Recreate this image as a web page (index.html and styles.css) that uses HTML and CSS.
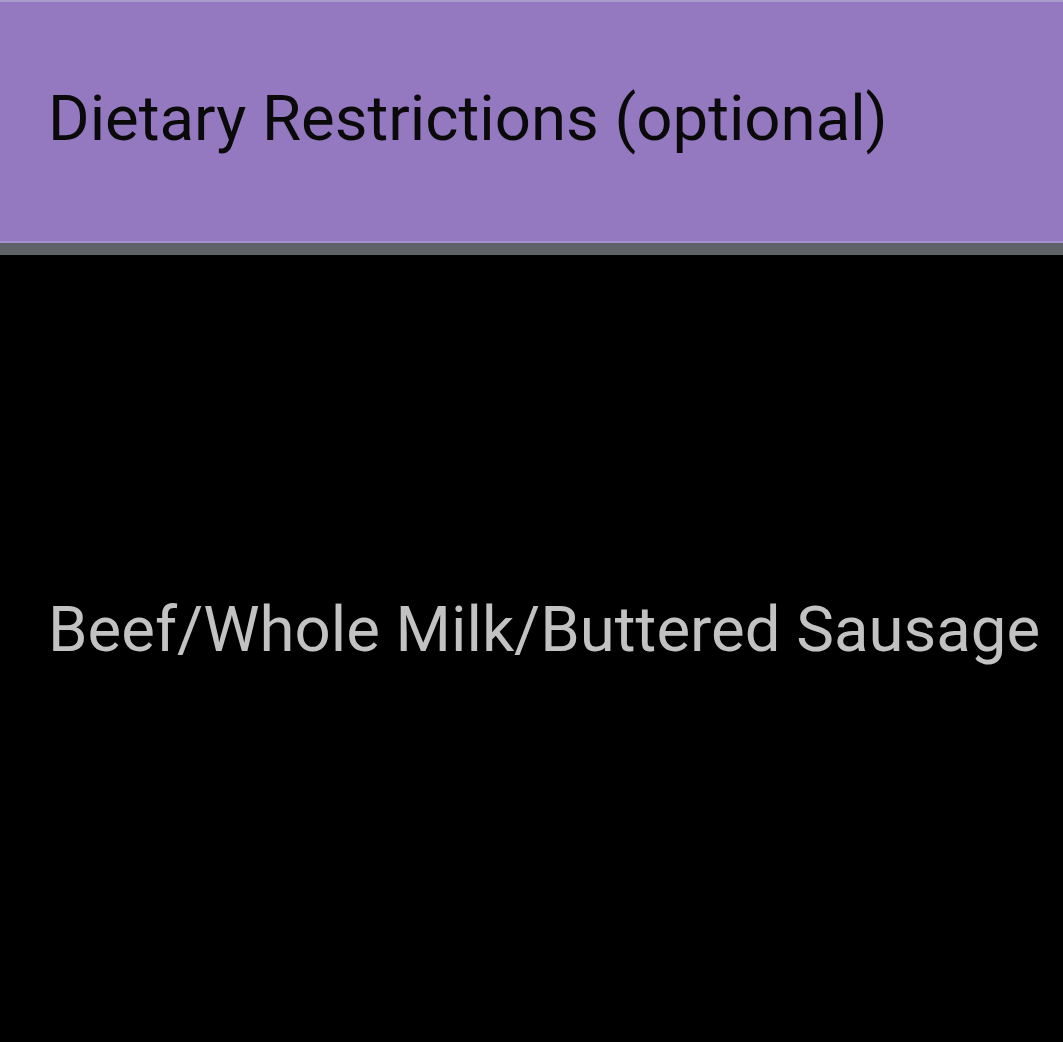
FILE: index.html
```html
<!DOCTYPE html>
<html lang="en">

<head>
  <meta charset="UTF-8">
  <meta name="viewport" content="width=device-width, initial-scale=1.0">
  <title>Dietary Restrictions</title>
  <link rel="stylesheet" href="styles.css">
</head>

<body>

  <header class="field-label">
    <h1>Dietary Restrictions (optional)</h1>
  </header>

  <div class="field-value">
    <p>Beef/Whole Milk/Buttered Sausage</p>
  </div>

</body>

</html>
```

FILE: styles.css
```css
html,
body {
  height: 100%;
}

body {
  font-family: Roboto, "Noto Sans", Arial, sans-serif;
  background-color: #000;
  margin: 0;
  display: flex;
  flex-direction: column;
}

.field-label {
  background-color: #9479c1;
  border-top: 2px solid #a99bcc;
  height: 243px;
  flex-shrink: 0;
  box-sizing: border-box;
  padding: 0 48px 8px;
  display: flex;
  align-items: center;
  box-shadow: inset 0 -2px 0 #a58fce;
}

.field-label h1 {
  margin: 0;
  font-size: 63.5px;
  font-weight: 400;
  color: #0a0a0a;
}

.field-value {
  border-top: 12px solid #5f6368;
  flex: 1;
  padding: 337px 48px 0;
}

.field-value p {
  margin: 0;
  font-size: 63.5px;
  color: #c2c2c2;
  line-height: 1.2;
  white-space: nowrap;
}
```
